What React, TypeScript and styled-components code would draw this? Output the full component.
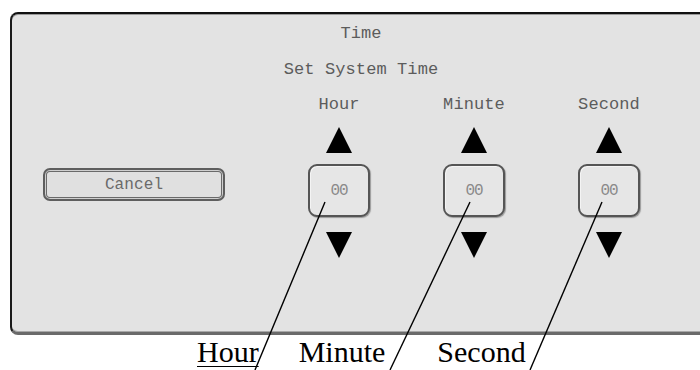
import React from "react";
import styled, { createGlobalStyle } from "styled-components";

const Global = createGlobalStyle`
  html, body { margin: 0; padding: 0; background: #ffffff; overflow: hidden; }
  #root { width: 700px; height: 370px; }
`;

const Page = styled.div`
  position: relative;
  width: 700px;
  height: 370px;
  overflow: hidden;
  padding: 12px 0 0 10px;
  box-sizing: border-box;
`;

const Panel = styled.div`
  box-sizing: border-box;
  width: 700px;
  height: 323px;
  background: #e3e3e3;
  border-left: 2px solid #1a1a1a;
  border-top: 2px solid #111;
  border-bottom: 3px solid #6a6a6a;
  border-radius: 8px 0 0 8px;
  box-shadow: inset 0 1px 0 #9a9a9a, inset 0 -1px 0 #a8a8a8;
  display: flex;
  flex-direction: column;
  padding-top: 11px;
  font-family: "Liberation Mono", "DejaVu Sans Mono", monospace;
  font-size: 17px;
  letter-spacing: 0.1px;
  color: #5c5c5c;
`;

const Title = styled.div<{ $gap?: number }>`
  text-align: center;
  line-height: 18px;
  height: 18px;
  margin-top: ${(p) => p.$gap ?? 0}px;
`;

const Controls = styled.div`
  display: flex;
  align-items: flex-start;
  margin-top: 17px;
  padding-left: 31px;
`;

const CancelButton = styled.div`
  box-sizing: border-box;
  width: 182px;
  height: 33px;
  margin-top: 72px;
  margin-right: 74px;
  border: 2px solid #5e5e5e;
  border-radius: 7px;
  background: #e0e0e0;
  box-shadow: inset 0 0 0 1px #cfcfcf, inset 0 0 0 2px #6a6a6a;
  display: flex;
  align-items: center;
  justify-content: center;
  color: #6a6a6a;
  font-size: 16px;
`;

const Spinners = styled.div`
  display: flex;
  gap: 55px;
`;

const Column = styled.div`
  width: 80px;
  display: flex;
  flex-direction: column;
  align-items: center;
`;

const Label = styled.div`
  line-height: 18px;
  height: 18px;
  white-space: nowrap;
`;

const Arrow = styled.div<{ $down?: boolean; $gap: number }>`
  width: 0;
  height: 0;
  margin-top: ${(p) => p.$gap}px;
  border-left: 13.5px solid transparent;
  border-right: 13.5px solid transparent;
  ${(p) =>
    p.$down
      ? "border-top: 26px solid #000;"
      : "border-bottom: 26px solid #000;"}
`;

const ValueBox = styled.div`
  box-sizing: border-box;
  width: 62px;
  height: 53px;
  margin-top: 11px;
  border: 2px solid #555;
  border-radius: 9px;
  background: #e6e6e6;
  box-shadow: inset 1px 1px 0 #f4f4f4, 1px 1px 1px #9a9a9a;
  display: flex;
  align-items: center;
  justify-content: center;
  color: #8a8a8a;
  font-size: 16px;
  letter-spacing: -1px;
`;

const Notes = styled.div`
  display: flex;
  padding-left: 187px;
  margin-top: 0;
  font-family: "Liberation Serif", "Times New Roman", serif;
  font-size: 30px;
  line-height: 34px;
  color: #000;
`;

const Note = styled.span<{ $ml?: number; $underline?: boolean }>`
  margin-left: ${(p) => p.$ml ?? 0}px;
  text-decoration: ${(p) => (p.$underline ? "underline" : "none")};
  text-decoration-thickness: 1px;
  text-underline-offset: 4px;
`;

const Leaders = styled.svg`
  position: absolute;
  left: 0;
  top: 0;
  pointer-events: none;
`;

const fields = ["Hour", "Minute", "Second"];

export default function App() {
  return (
    <Page>
      <Global />
      <Panel>
        <Title>Time</Title>
        <Title $gap={18}>Set System Time</Title>
        <Controls>
          <CancelButton>Cancel</CancelButton>
          <Spinners>
            {fields.map((f) => (
              <Column key={f}>
                <Label>{f}</Label>
                <Arrow $gap={13} />
                <ValueBox>00</ValueBox>
                <Arrow $down $gap={15} />
              </Column>
            ))}
          </Spinners>
        </Controls>
      </Panel>
      <Notes>
        <Note $underline>Hour</Note>
        <Note $ml={40}>Minute</Note>
        <Note $ml={52}>Second</Note>
      </Notes>
      <Leaders width={700} height={370} viewBox="0 0 700 370">
        <line x1={325} y1={202} x2={255} y2={370} stroke="#000" strokeWidth={1.4} />
        <line x1={470} y1={202} x2={390} y2={370} stroke="#000" strokeWidth={1.4} />
        <line x1={602} y1={202} x2={530} y2={370} stroke="#000" strokeWidth={1.4} />
      </Leaders>
    </Page>
  );
}
